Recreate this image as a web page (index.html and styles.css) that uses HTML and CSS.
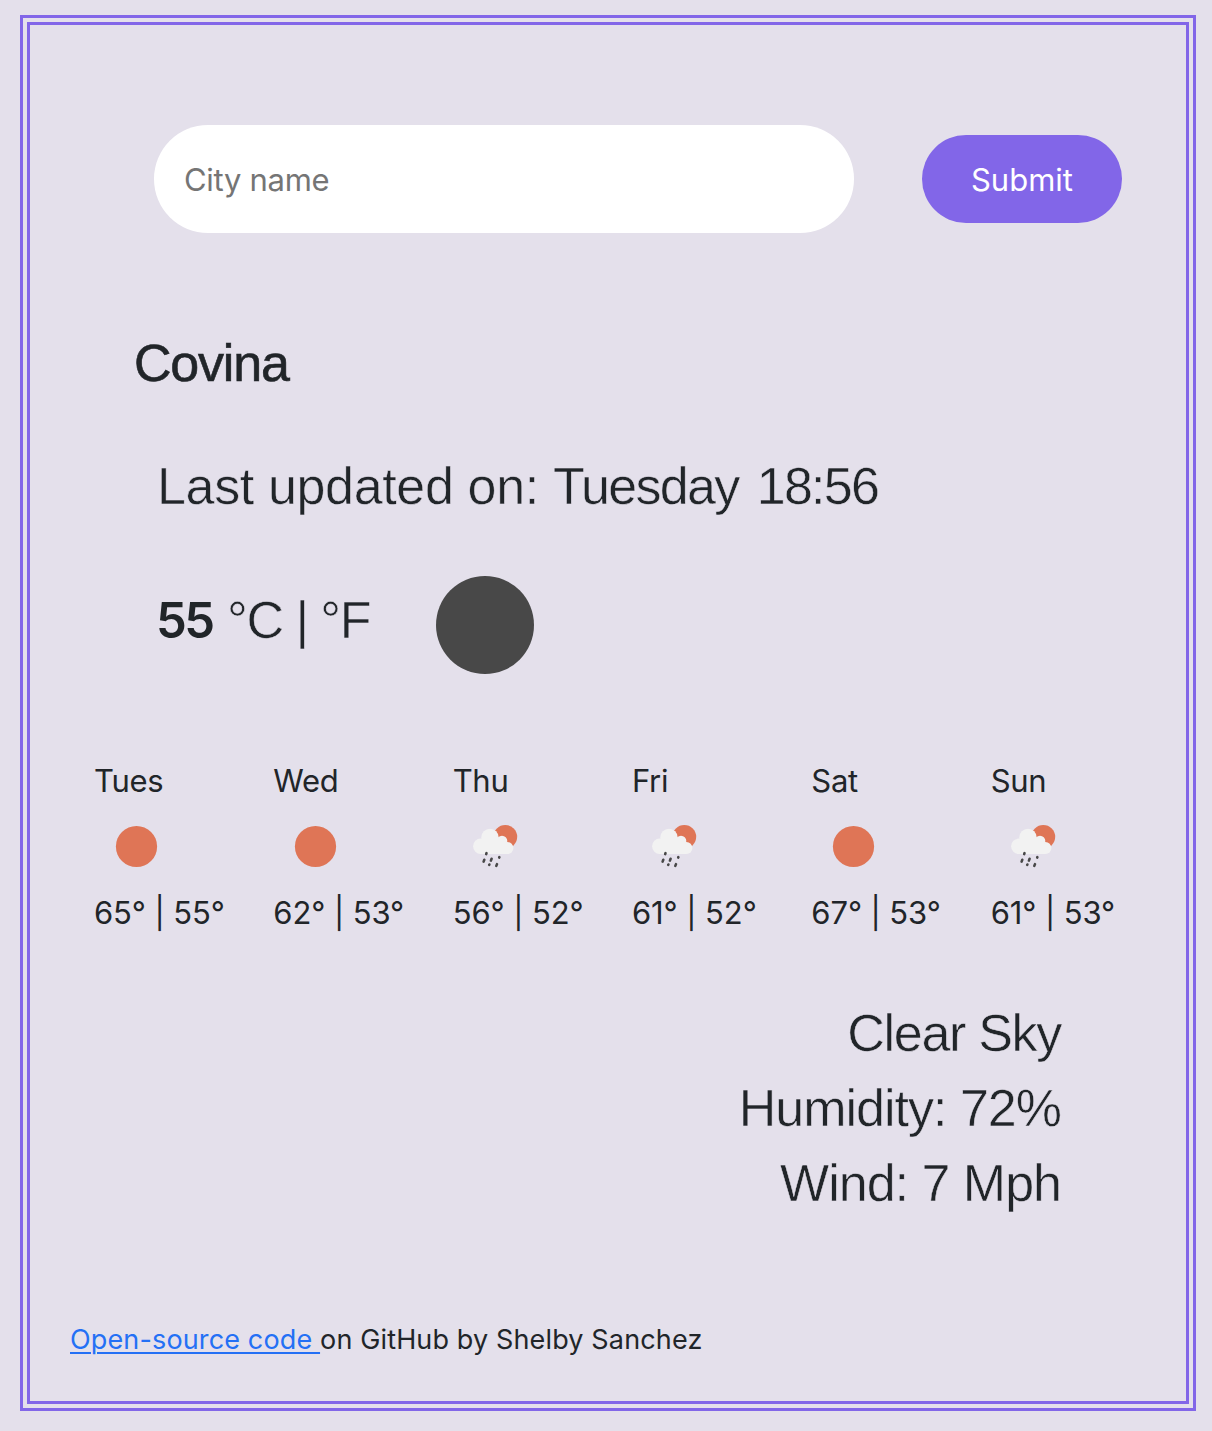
FILE: index.html
```html
<!DOCTYPE html>
<html lang="en">
<head>
<meta charset="utf-8">
<title>Weather</title>
<link rel="stylesheet" href="styles.css">
</head>
<body>
<svg width="0" height="0" class="defs" aria-hidden="true">
  <symbol id="sun" viewBox="0 0 84 84"><circle cx="42.5" cy="41.5" r="20.6" fill="#df7556"/></symbol>
  <symbol id="rain" viewBox="0 0 84 84">
    <circle cx="52.3" cy="31.8" r="11.9" fill="#df7556"/>
    <g fill="#f2f2f2">
      <circle cx="27.8" cy="41.3" r="7.7"/>
      <circle cx="37" cy="32.4" r="8.7"/>
      <circle cx="49" cy="36" r="5.3"/>
      <circle cx="54.4" cy="43" r="6"/>
      <path d="M27.8 49V37L33 34h16l5.4 5v10z"/>
    </g>
    <g stroke="#484848" stroke-width="2.6" stroke-linecap="round">
      <path d="M33.5 48.2l-.3 .9M31.3 54.8l-.7 1.8M38.6 53.8l-.7 1.8M46.4 52.1l-.2.5M36.4 59.5l-.2.4M44 59.1l-.7 1.8"/>
    </g>
  </symbol>
</svg>
<main class="card">
  <form class="search">
    <input class="city-input" type="text" placeholder="City name">
    <button class="submit" type="button">Submit</button>
  </form>
  <h1 class="city">Covina</h1>
  <p class="updated">Last updated on: <span class="weekday">Tuesday</span> <span class="time">18:56</span></p>
  <div class="current">
    <p class="temp"><strong>55</strong> <span class="units">°C | °F</span></p>
    <svg class="moon" viewBox="0 0 98 98"><circle cx="49" cy="49" r="49" fill="#484848"/></svg>
  </div>
  <section class="forecast">
    <div class="day"><p>Tues</p><svg class="icon"><use href="#sun"/></svg><p class="range">65° | 55°</p></div>
    <div class="day"><p>Wed</p><svg class="icon"><use href="#sun"/></svg><p class="range">62° | 53°</p></div>
    <div class="day"><p>Thu</p><svg class="icon"><use href="#rain"/></svg><p class="range">56° | 52°</p></div>
    <div class="day"><p>Fri</p><svg class="icon"><use href="#rain"/></svg><p class="range">61° | 52°</p></div>
    <div class="day"><p>Sat</p><svg class="icon"><use href="#sun"/></svg><p class="range">67° | 53°</p></div>
    <div class="day"><p>Sun</p><svg class="icon"><use href="#rain"/></svg><p class="range">61° | 53°</p></div>
  </section>
  <ul class="details">
    <li class="sky">Clear Sky</li>
    <li class="humidity">Humidity: 72%</li>
    <li class="wind">Wind: 7 Mph</li>
  </ul>
  <footer class="credit"><a href="#">Open-source code </a><span>on GitHub by Shelby Sanchez</span></footer>
</main>
</body>
</html>
```
FILE: styles.css
```css
* { box-sizing: border-box; margin: 0; padding: 0; }
body {
  background: #e4e0eb;
  color: #212529;
  font-family: Inter, sans-serif;
  display: flow-root;
}
.defs { display: block; height: 0; }
.card {
  margin: 15px 16px 20px 20px;
  height: 1396px;
  border: 10px double #8266e8;
  padding: 100px 40px 0;
}
.search { display: flex; align-items: center; gap: 68px; padding-left: 84px; }
.city-input {
  width: 700px;
  height: 108px;
  border: 0;
  border-radius: 54px;
  padding: 0 30px;
  background: #fff;
  font: 430 31px Inter, sans-serif;
  letter-spacing: -.3px;
}
.city-input::placeholder { color: #757575; opacity: 1; }
.submit {
  width: 200px;
  height: 88px;
  border: 0;
  border-radius: 44px;
  background: #8266e8;
  color: #fff;
  font: 430 31px Inter, sans-serif;
  letter-spacing: 0;
}
.city, .updated, .temp, .details {
  font-family: "Liberation Sans", Arial, sans-serif;
  font-size: 52px;
  font-weight: 400;
}
.updated, .units, .details { -webkit-text-stroke: .5px #e4e0eb; }
.city { margin-top: 100px; padding-left: 64px; line-height: 60px; letter-spacing: -1.2px; -webkit-text-stroke: .6px #212529; }
.updated { margin-top: 56px; padding-left: 87px; line-height: 75px; letter-spacing: -.35px; }
.weekday { letter-spacing: -1.7px; }
.time { letter-spacing: -1.7px; margin-left: 4px; }
.current { display: flex; align-items: center; height: 98px; margin-top: 52px; padding-left: 86px; }
.temp { width: 280px; line-height: 88px; height: 98px; white-space: pre; }
.temp strong { font: 600 49px Inter, sans-serif; letter-spacing: -2.5px; }
.units { letter-spacing: -1.5px; }
.moon { width: 98px; height: 98px; }
.forecast { display: grid; grid-template-columns: repeat(6, 1fr); margin-top: 83px; }
.day { padding-left: 24px; font-size: 31px; font-weight: 430; line-height: 48px; letter-spacing: -.3px; white-space: pre; }
.range { letter-spacing: -.1px; }
.icon { display: block; width: 84px; height: 84px; }
.details { list-style: none; margin-top: 59px; padding-right: 85px; line-height: 75px; text-align: right; letter-spacing: -1px; }
.sky { letter-spacing: -1.3px; }
.credit { margin-top: 99px; font-size: 27px; font-weight: 430; line-height: 40px; letter-spacing: .14px; white-space: pre; }
.credit a { color: #2470f5; text-decoration-thickness: 2px; text-underline-offset: 3px; }
```
